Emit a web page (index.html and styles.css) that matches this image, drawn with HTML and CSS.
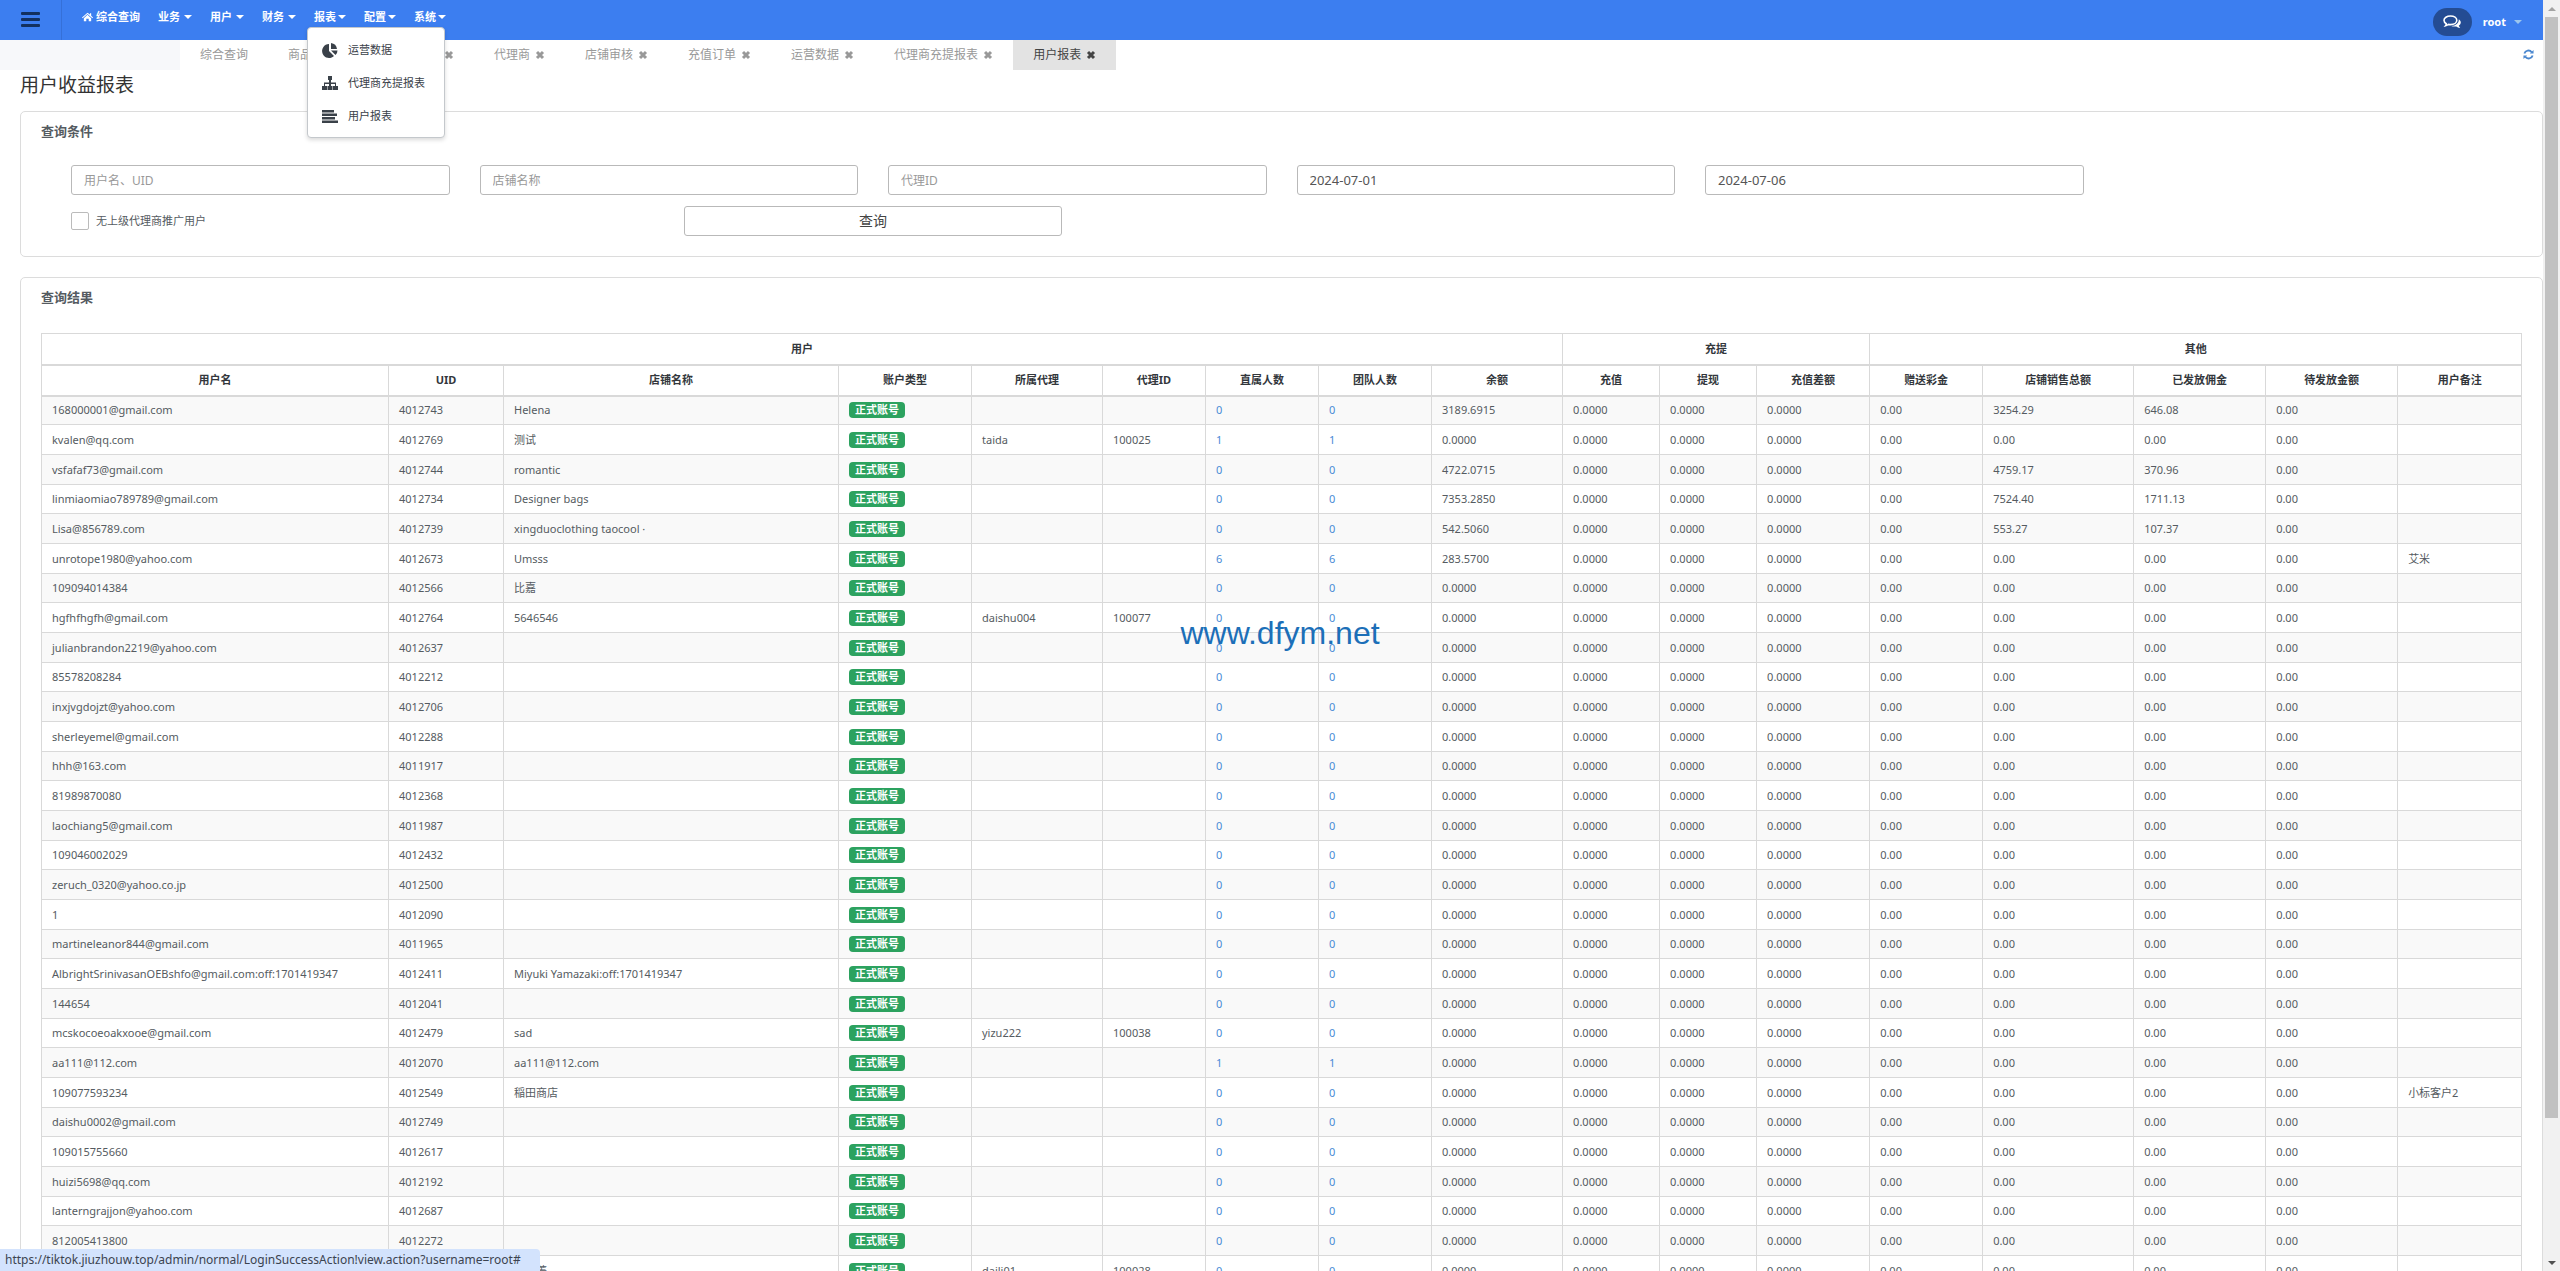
FILE: index.html
```html
<!DOCTYPE html>
<html lang="zh-CN">
<head>
<meta charset="utf-8">
<title>用户收益报表</title>
<link rel="stylesheet" href="styles.css">
</head>
<body>
<div class="viewport">
  <div class="page">
    <header class="topbar">
      <button class="menu-toggle" aria-label="菜单"><span></span><span></span><span></span></button>
      <nav class="main-nav">
        <a href="#" class="nav-link nav-home"><svg class="home-icon" viewBox="0 0 18 16"><path d="M9 1 0 9l1 1 8-7 8 7 1-1-3-3V2h-2v2z"/><path d="M9 4.500 3 10v5h4v-4h4v4h4v-5z"/></svg>综合查询</a>
        <a href="#" class="nav-link spaced">业务<i class="caret"></i></a>
        <a href="#" class="nav-link spaced">用户<i class="caret"></i></a>
        <a href="#" class="nav-link spaced">财务<i class="caret"></i></a>
        <div class="nav-item">
          <a href="#" class="nav-link">报表<i class="caret"></i></a>
          <ul class="dropdown">
            <li><a href="#"><svg viewBox="0 0 16 16"><path d="M7 2v7l5 5A7 7 0 1 1 7 2z"/><path d="M9 1a7 7 0 0 1 6 6H9z"/><path d="M9 8.500h6.500a6 6 0 0 1-2 4.500z"/></svg>运营数据</a></li>
            <li><a href="#"><svg viewBox="0 0 16 16"><path d="M6 1h4v4H9v2.500h5V11h2v4h-5v-4h2V9H9v2h1.500v4h-5v-4H7V9H3v2h2v4H0v-4h2V7.500h5V5H6z"/></svg>代理商充提报表</a></li>
            <li><a href="#"><svg viewBox="0 0 16 16"><path d="M0 2h12v2.500H0zM0 5.500h15V8H0zM0 9h13v2.500H0zM0 12.500h16V15H0z"/></svg>用户报表</a></li>
          </ul>
        </div>
        <a href="#" class="nav-link">配置<i class="caret"></i></a>
        <a href="#" class="nav-link">系统<i class="caret"></i></a>
      </nav>
      <div class="account">
        <button class="chat" aria-label="消息"><svg viewBox="0 0 18 14"><path class="bubble" d="M7.500 1c3.600 0 6.300 1.900 6.300 4.300S11.100 9.600 7.500 9.600c-.7 0-1.300-.1-1.900-.2-1.100.8-2.100 1.100-3 1.300.4-.5.6-1.100.7-1.900C1.900 8 1 6.700 1 5.300 1 2.900 3.900 1 7.500 1z"/><path d="M15.800 4.200c1.200.8 2 1.900 2 3.100 0 1.400-.8 2.500-2 3.300.2.900.7 1.700 1.400 2.300-1.700-.1-2.900-.7-3.900-1.500-1.700.4-3.600.2-5.100-.5 4.500-.1 7.800-2.800 7.600-6.700z"/></svg></button>
        <button class="user">root<i class="caret"></i></button>
      </div>
    </header>

    <div class="tabs">
      <div class="tabs-pad"></div>
      <a href="#" class="tab">综合查询</a>
      <a href="#" class="tab">商品管理<svg class="x" viewBox="0 0 10 10"><path d="M2 2l6 6M8 2 2 8"/></svg></a>
      <a href="#" class="tab">店铺管理<svg class="x" viewBox="0 0 10 10"><path d="M2 2l6 6M8 2 2 8"/></svg></a>
      <a href="#" class="tab">代理商<svg class="x" viewBox="0 0 10 10"><path d="M2 2l6 6M8 2 2 8"/></svg></a>
      <a href="#" class="tab">店铺审核<svg class="x" viewBox="0 0 10 10"><path d="M2 2l6 6M8 2 2 8"/></svg></a>
      <a href="#" class="tab">充值订单<svg class="x" viewBox="0 0 10 10"><path d="M2 2l6 6M8 2 2 8"/></svg></a>
      <a href="#" class="tab">运营数据<svg class="x" viewBox="0 0 10 10"><path d="M2 2l6 6M8 2 2 8"/></svg></a>
      <a href="#" class="tab">代理商充提报表<svg class="x" viewBox="0 0 10 10"><path d="M2 2l6 6M8 2 2 8"/></svg></a>
      <a href="#" class="tab active">用户报表<svg class="x" viewBox="0 0 10 10"><path d="M2 2l6 6M8 2 2 8"/></svg></a>
      <button class="refresh" aria-label="刷新"><svg viewBox="0 0 12 12"><path class="arc" d="M1.500 5a4.500 4.500 0 0 1 8-1.500M10.500 7a4.500 4.500 0 0 1-8 1.500"/><path d="M11.500 1v4h-4zM.5 11V7h4z"/></svg></button>
    </div>

    <main class="content">
      <h1>用户收益报表</h1>
      <section class="panel">
        <h2>查询条件</h2>
        <form class="filters">
          <input class="field" type="text" placeholder="用户名、UID" aria-label="用户名、UID">
          <input class="field" type="text" placeholder="店铺名称" aria-label="店铺名称">
          <input class="field" type="text" placeholder="代理ID" aria-label="代理ID">
          <input class="field date" type="text" value="2024-07-01" aria-label="开始日期">
          <input class="field date" type="text" value="2024-07-06" aria-label="结束日期">
          <label class="check"><input type="checkbox">无上级代理商推广用户</label>
          <button class="submit" type="button">查询</button>
        </form>
      </section>

      <section class="panel results">
        <h2>查询结果</h2>
        <table>
          <colgroup><col style="width:347px"><col style="width:115px"><col style="width:335px"><col style="width:133px"><col style="width:131px"><col style="width:103px"><col style="width:113px"><col style="width:113px"><col style="width:131px"><col style="width:97px"><col style="width:97px"><col style="width:113px"><col style="width:113px"><col style="width:151px"><col style="width:132px"><col style="width:132px"><col style="width:124px"></colgroup>
          <thead>
            <tr><th colspan="9">用户</th><th colspan="3">充提</th><th colspan="5">其他</th></tr>
            <tr><th>用户名</th><th>UID</th><th>店铺名称</th><th>账户类型</th><th>所属代理</th><th>代理ID</th><th>直属人数</th><th>团队人数</th><th>余额</th><th>充值</th><th>提现</th><th>充值差额</th><th>赠送彩金</th><th>店铺销售总额</th><th>已发放佣金</th><th>待发放金额</th><th>用户备注</th></tr>
          </thead>
          <tbody id="rows"></tbody>
        </table>
      </section>
    </main>
  </div>

  <div class="scrollbar"><i class="arrow up"></i><div class="track"><div class="thumb"></div></div><i class="arrow down"></i></div>
  <div class="watermark">www.dfym.net</div>
  <div class="status">https://tiktok.jiuzhouw.top/admin/normal/LoginSuccessAction!view.action?username=root#</div>
</div>
<script src="app.js"></script>
</body>
</html>
```
FILE: app.js
```js
// user, uid, shop, agent, agent id, members, balance, sales, commission, note
const users = [
  ['168000001@gmail.com', '4012743', 'Helena', '', '', 0, '3189.6915', '3254.29', '646.08', ''],
  ['kvalen@qq.com', '4012769', '测试', 'taida', '100025', 1],
  ['vsfafaf73@gmail.com', '4012744', 'romantic', '', '', 0, '4722.0715', '4759.17', '370.96', ''],
  ['linmiaomiao789789@gmail.com', '4012734', 'Designer bags', '', '', 0, '7353.2850', '7524.40', '1711.13', ''],
  ['Lisa@856789.com', '4012739', 'xingduoclothing taocool ·', '', '', 0, '542.5060', '553.27', '107.37', ''],
  ['unrotope1980@yahoo.com', '4012673', 'Umsss', '', '', 6, '283.5700', '0.00', '0.00', '艾米'],
  ['109094014384', '4012566', '比嘉'],
  ['hgfhfhgfh@gmail.com', '4012764', '5646546', 'daishu004', '100077'],
  ['julianbrandon2219@yahoo.com', '4012637'],
  ['85578208284', '4012212'],
  ['inxjvgdojzt@yahoo.com', '4012706'],
  ['sherleyemel@gmail.com', '4012288'],
  ['hhh@163.com', '4011917'],
  ['81989870080', '4012368'],
  ['laochiang5@gmail.com', '4011987'],
  ['109046002029', '4012432'],
  ['zeruch_0320@yahoo.co.jp', '4012500'],
  ['1', '4012090'],
  ['martineleanor844@gmail.com', '4011965'],
  ['AlbrightSrinivasanOEBshfo@gmail.com:off:1701419347', '4012411', 'Miyuki Yamazaki:off:1701419347'],
  ['144654', '4012041'],
  ['mcskocoeoakxooe@gmail.com', '4012479', 'sad', 'yizu222', '100038'],
  ['aa111@112.com', '4012070', 'aa111@112.com', '', '', 1],
  ['109077593234', '4012549', '稲田商店', '', '', 0, '0.0000', '0.00', '0.00', '小标客户2'],
  ['daishu0002@gmail.com', '4012749'],
  ['109015755660', '4012617'],
  ['huizi5698@qq.com', '4012192'],
  ['lanterngrajjon@yahoo.com', '4012687'],
  ['812005413800', '4012272'],
  ['109022847613', '4012305', '李小菁', 'daili01', '100028']
];

document.getElementById('rows').innerHTML = users.map(([user, uid, shop = '', agent = '', agentId = '', members = 0,
  balance = '0.0000', sales = '0.00', paid = '0.00', note = '']) => {
  const link = `<a href="#">${members}</a>`;
  const cells = [user, uid, shop, '<span class="badge">正式账号</span>', agent, agentId, link, link, balance,
    '0.0000', '0.0000', '0.0000', '0.00', sales, paid, '0.00', note];
  return '<tr>' + cells.map(c => `<td>${c}</td>`).join('') + '</tr>';
}).join('');
```
FILE: styles.css
```css
* { box-sizing: border-box; }
body {
  margin: 0;
  background: #fff;
  color: #555b61;
  font: 11px/16px "Noto Sans", "Noto Sans CJK SC", sans-serif;
}
a { color: inherit; text-decoration: none; }
button { border: 0; padding: 0; background: none; color: inherit; font: inherit; cursor: pointer; }
ul { list-style: none; margin: 0; padding: 0; }
svg { display: block; fill: currentColor; flex: none; }

.viewport { position: relative; display: flex; height: 100vh; overflow: hidden; }
.page { flex: 1; min-width: 0; }

/* top bar */
.topbar { display: flex; height: 40px; background: #3c7ef0; color: #fff; font-weight: 700; }
.menu-toggle {
  width: 62px; padding-bottom: 2px;
  border-right: 1px solid #3570d8;
  display: flex; flex-direction: column; align-items: center; justify-content: center; gap: 3px;
}
.menu-toggle span { width: 19px; height: 3px; border-radius: 1px; background: #12305f; }
.main-nav { display: flex; align-items: flex-start; gap: 18px; padding: 9px 0 0 20px; }
.nav-link { display: flex; align-items: center; gap: 2px; }
.nav-link.spaced { gap: 4px; }
.nav-home { gap: 3px; }
.home-icon { width: 11px; height: 10px; }
.caret { border: 4px solid transparent; border-top-color: currentColor; border-bottom: 0; }
.nav-item { position: relative; }
.dropdown {
  position: absolute; z-index: 5; top: 18px; left: -7px;
  width: 138px; padding: 5px 0;
  background: #fff; color: #3a4149;
  border: 1px solid #c4c8cc; border-radius: 4px;
  box-shadow: 0 2px 4px rgba(0, 0, 0, .15);
  font-weight: 400;
}
.dropdown a { display: flex; align-items: center; gap: 10px; height: 33px; padding-left: 14px; white-space: nowrap; }
.dropdown svg { width: 16px; height: 16px; }
.account { display: flex; align-items: center; gap: 11px; margin-left: auto; padding: 4px 21px 0 0; }
.chat { width: 39px; height: 28px; border-radius: 14px; background: #244c93; display: flex; align-items: center; justify-content: center; }
.chat svg { width: 18px; height: 14px; }
.bubble { fill: none; stroke: #fff; stroke-width: 1.6; }
.user { display: flex; align-items: center; gap: 8px; }
.user .caret { color: #9cc6ee; }

/* tabs */
.tabs { display: flex; height: 30px; color: #999; font-size: 12px; }
.tabs-pad { width: 180px; background: #f7f8fa; }
.tab { display: flex; align-items: center; gap: 5px; padding: 0 20px; white-space: nowrap; }
.tab.active { background: #e3e3e3; color: #444; }
.x { width: 10px; height: 10px; stroke: currentColor; stroke-width: 3; }
.refresh { margin: 9px 9px 0 auto; height: 11px; color: #4a87cf; }
.refresh svg { width: 11px; height: 11px; }
.arc { fill: none; stroke: currentColor; stroke-width: 2; }

/* panels */
.content { padding-left: 20px; }
h1 { margin: 0; padding: 2px 0 13px; font-size: 19px; line-height: 26px; font-weight: 400; color: #333; }
.panel { border: 1px solid #dcdcdc; border-radius: 5px; padding: 10px 20px 20px; margin-bottom: 20px; }
h2 { margin: 0; font-size: 13px; line-height: 18px; font-weight: 700; color: #555b61; }
.filters {
  display: grid; grid-template-columns: repeat(12, 1fr); column-gap: 30px; row-gap: 11px;
  margin: 25px 30px 0;
}
.filters > * { grid-column: span 2; height: 30px; }
.field, .submit { width: 100%; border: 1px solid #b9b9b9; border-radius: 3px; background: #fff; }
.field { padding: 0 12px; color: #555; font: 12px/16px "Noto Sans", "Noto Sans CJK SC", sans-serif; }
.field.date { font-size: 13px; }
.field::placeholder { color: #999; opacity: 1; }
.filters .check { grid-column: 1 / span 2; display: flex; align-items: center; gap: 7px; white-space: nowrap; }
.check input { appearance: none; width: 18px; height: 18px; margin: 0; border: 1px solid #bbb; border-radius: 2px; }
.filters .submit { grid-column: 4 / span 2; font-size: 14px; color: #444; }

/* results */
table { width: 100%; margin-top: 27px; border-collapse: collapse; table-layout: fixed; }
th, td { border: 1px solid #d9d9d9; height: 30px; padding: 0 10px; white-space: nowrap; }
th { height: 31px; border-bottom-width: 2px; color: #33373c; text-align: center; }
td { text-align: left; }
tbody tr:nth-child(odd) { background: #f9f9f9; }
tbody tr:nth-child(3n+1) td { height: 29px; }
td a { color: #4a8bd6; }
.badge { display: inline-block; padding: 0 6px; border-radius: 4px; background: #2ca25f; color: #fff; font-weight: 700; }

/* overlays */
.scrollbar { width: 17px; background: #f1f1f1; display: flex; flex-direction: column; align-items: center; }
.track { flex: 1; width: 13px; }
.thumb { height: 89%; background: #c1c1c1; }
.arrow { height: 17px; display: flex; align-items: center; }
.arrow::before { content: ""; border: 4px solid transparent; }
.arrow.up::before { border-bottom-color: #a3a3a3; border-top: 0; }
.arrow.down::before { border-top-color: #505050; border-bottom: 0; }
.watermark {
  position: absolute; inset: 0; padding-bottom: 6px;
  display: flex; align-items: center; justify-content: center;
  color: #1c6fb8; font: 32px/36px "Liberation Sans", Arial, sans-serif;
  pointer-events: none;
}
.status {
  position: absolute; left: 0; bottom: 0; z-index: 6;
  height: 22px; min-width: 540px; padding: 0 8px 0 5px;
  border-radius: 0 4px 0 0; background: #d3e3fd; color: #3c4450;
  font-size: 12px; line-height: 22px;
}
```
